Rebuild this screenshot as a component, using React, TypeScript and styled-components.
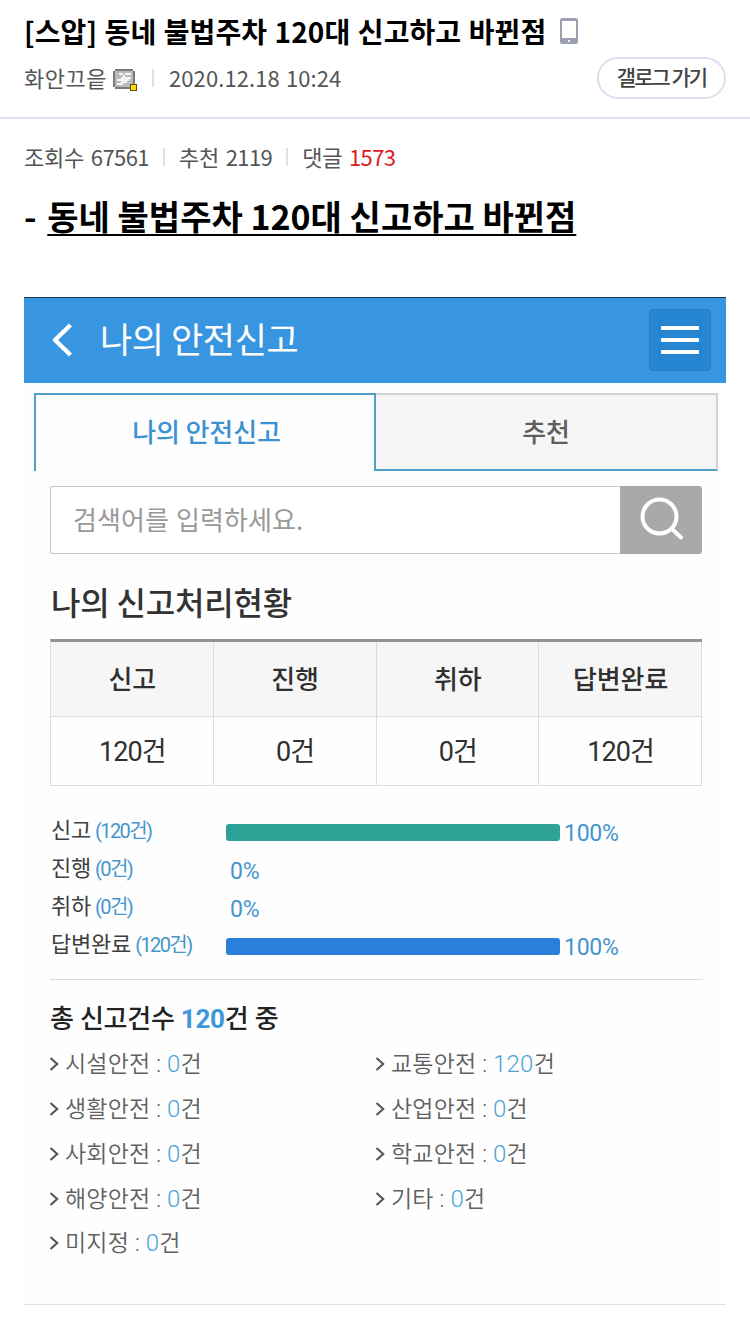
import React from "react";
import styled, { createGlobalStyle } from "styled-components";

const GlobalStyle = createGlobalStyle`
  * { box-sizing: border-box; }
  body {
    margin: 0;
    background: #fff;
    color: #000;
    font-family: "Noto Sans CJK KR", sans-serif;
  }
  h1, h2, h3, p, ul { margin: 0; padding: 0; font-weight: inherit; }
  button { font-family: inherit; padding: 0; cursor: pointer; }
`;

const Page = styled.main`
  width: 750px;
  height: 1320px;
  overflow: hidden;
  white-space: nowrap;
`;

const PostHeader = styled.header`
  height: 119px;
  padding: 11px 24px 0;
  border-bottom: 2px solid #e1e1f0;
`;

const PostTitle = styled.h1`
  display: flex;
  align-items: center;
  gap: 14px;
  height: 40px;
  font-size: 28px;
  font-weight: 700;
  letter-spacing: 0.1px;
  word-spacing: 1px;
  line-height: 40px;
`;

const MetaRow = styled.div`
  display: flex;
  align-items: center;
  height: 42px;
  margin-top: 6px;
  color: #555;
  font-size: 22px;
  line-height: 38px;
`;

const Author = styled.span`
  display: flex;
  align-items: center;
  gap: 6px;
  padding-bottom: 2px;
  letter-spacing: 0.5px;

  svg { margin-top: 6px; }
`;

const PostDate = styled.span`
  padding-bottom: 2px;
  letter-spacing: 0.1px;
  word-spacing: 1px;
`;

const Divider = styled.i<{ $gap: number }>`
  width: 2px;
  height: 18px;
  margin: 0 ${(p) => p.$gap}px;
  background: #dfdff0;
`;

const GallogButton = styled.button`
  width: 129px;
  height: 42px;
  margin-left: auto;
  border: 2px solid #dedef0;
  border-radius: 21px;
  padding-bottom: 4px;
  background: #fff;
  color: #444;
  font-size: 21px;
  font-weight: 500;
  letter-spacing: -2px;
  line-height: 34px;
`;

const Stats = styled.div`
  display: flex;
  align-items: center;
  height: 40px;
  margin: 18px 24px 0;
  color: #555;
  font-size: 22px;
  line-height: 36px;
`;

const Stat = styled.span`
  padding-bottom: 2px;
  letter-spacing: -0.2px;
  word-spacing: 2px;
`;

const Digits = styled.span`
  letter-spacing: -0.6px;
`;

const CommentCount = styled(Digits)`
  color: #dd1a21;
`;

const Headline = styled.h2`
  height: 120px;
  padding: 14px 24px 0;
  font-size: 34px;
  font-weight: 700;
  line-height: 50px;
`;

const Dash = styled.span`
  margin-right: 3px;
`;

const Underlined = styled.span`
  text-decoration: underline;
  text-decoration-thickness: 2px;
  text-underline-offset: 4px;
  text-decoration-skip-ink: none;
`;

const AppCard = styled.section`
  width: 702px;
  height: 1008px;
  margin: 0 24px;
  border-top: 1px solid #1f3550;
  border-bottom: 1px solid #e3e3e3;
  background: #fefefe;
`;

const AppBar = styled.header`
  display: flex;
  align-items: center;
  height: 85px;
  padding: 0 15px 1px 27px;
  background: #3896e1;
  color: #fff;
`;

const AppTitle = styled.h2`
  margin-left: 26px;
  padding-bottom: 6px;
  font-size: 35px;
  font-weight: 400;
  letter-spacing: -0.4px;
`;

const MenuButton = styled.button`
  display: flex;
  flex-direction: column;
  align-items: center;
  justify-content: center;
  gap: 8px;
  width: 62px;
  height: 62px;
  margin-left: auto;
  border: 1px solid #2280cb;
  border-radius: 4px;
  background: #2586d4;
`;

const MenuLine = styled.i`
  width: 38px;
  height: 4px;
  border-radius: 1px;
  background: #fff;
`;

const Tabs = styled.nav`
  display: flex;
  height: 78px;
  margin: 10px 8px 0 10px;
`;

const Tab = styled.button<{ $active?: boolean }>`
  width: 342px;
  padding: 0 0 ${(p) => (p.$active ? 6 : 4)}px ${(p) => (p.$active ? 3 : 0)}px;
  border: solid ${(p) => (p.$active ? "#4f9fc6" : "#d2d2d2")};
  border-width: ${(p) => (p.$active ? "2px 2px 0 2px" : "2px 2px 2px 0")};
  border-bottom-color: #4f9fc6;
  background: ${(p) => (p.$active ? "#fefefe" : "#f6f6f6")};
  color: ${(p) => (p.$active ? "#3a92d3" : "#5e5e5e")};
  font-size: 26px;
  font-weight: 500;
  letter-spacing: -0.1px;
`;

const SearchBar = styled.div`
  display: flex;
  width: 652px;
  height: 68px;
  margin: 15px 0 0 26px;
`;

const SearchField = styled.div`
  flex: 1;
  padding-left: 22px;
  border: 1px solid #c6c6c6;
  border-right: 0;
  border-radius: 3px 0 0 3px;
  background: #fff;
  color: #999;
  font-size: 26px;
  font-weight: 400;
  letter-spacing: 0.1px;
  word-spacing: 1px;
  line-height: 63px;
`;

const SearchButton = styled.button`
  width: 82px;
  border: 0;
  border-radius: 0 3px 3px 0;
  padding: 2px 0 0 2px;
  background: #a9a9a9;
`;

const SectionTitle = styled.h3`
  height: 85px;
  padding: 23px 0 0 27px;
  color: #333;
  font-size: 32px;
  font-weight: 500;
  letter-spacing: -0.2px;
  line-height: 48px;
`;

const StatusTable = styled.div`
  display: grid;
  grid-template-columns: repeat(4, 1fr);
  grid-template-rows: 75px 69px;
  width: 652px;
  margin-left: 26px;
  border-top: 3px solid #939393;
  border-left: 1px solid #dcdcdc;
`;

const Cell = styled.div<{ $head?: boolean }>`
  display: flex;
  align-items: center;
  justify-content: center;
  padding: 0 0 3px 1px;
  border-right: 1px solid #dcdcdc;
  border-bottom: 1px solid #dcdcdc;
  background: ${(p) => (p.$head ? "#f6f6f6" : "#fefefe")};
  color: #303030;
  font-family: Roboto, "Noto Sans CJK KR", sans-serif;
  font-size: ${(p) => (p.$head ? 26 : 27)}px;
  font-weight: ${(p) => (p.$head ? 500 : 400)};
  letter-spacing: ${(p) => (p.$head ? -0.1 : -0.9)}px;
`;

const Chart = styled.div`
  width: 653px;
  height: 194px;
  margin-left: 26px;
  padding-top: 27px;
  border-bottom: 1px solid #dadada;
`;

const ChartRow = styled.div`
  display: flex;
  align-items: center;
  height: 38px;
`;

const ChartLabel = styled.span`
  width: 176px;
  padding: 0 0 5px 1px;
  color: #404040;
  font-size: 22px;
  letter-spacing: -0.2px;
  line-height: 33px;
`;

const LabelCount = styled.span`
  margin-left: 4px;
  color: #4595ce;
  font-family: Roboto, "Noto Sans CJK KR", sans-serif;
  font-size: 20px;
  letter-spacing: -1.6px;
`;

const Bar = styled.i<{ $color: string }>`
  height: 17px;
  border-radius: 3px;
  background: ${(p) => p.$color};
`;

const Percent = styled.span`
  margin-left: 4px;
  padding-top: 3px;
  color: #4595ce;
  font-family: Roboto, sans-serif;
  font-size: 23px;
  letter-spacing: -0.3px;
  line-height: 35px;
`;

const Total = styled.h3`
  height: 60px;
  padding: 19px 0 0 26px;
  color: #222;
  font-family: Roboto, "Noto Sans CJK KR", sans-serif;
  font-size: 26px;
  font-weight: 500;
  letter-spacing: -0.25px;
  line-height: 40px;
`;

const TotalCount = styled.strong`
  color: #3f96da;
  font-weight: 700;
`;

const CategoryGrid = styled.ul`
  display: grid;
  grid-template-columns: 326px 326px;
  grid-auto-rows: 44.75px;
  margin-left: 25px;
  list-style: none;
`;

const Category = styled.li`
  display: flex;
  align-items: center;
  gap: 6px;
  color: #606060;
  font-family: Roboto, "Noto Sans CJK KR", sans-serif;
  font-size: 23px;
  font-weight: 350;

  svg { margin-top: 4px; }
`;

const CategoryText = styled.span`
  letter-spacing: 0.2px;
`;

const CategoryCount = styled.span`
  color: #4ba3d8;
  font-size: 24px;
`;

const PhoneIcon = () => (
  <svg width="18" height="26" viewBox="0 0 18 26">
    <rect width="18" height="26" rx="2.5" fill="#9c9eb2" />
    <rect x="2" y="3" width="14" height="17" fill="#fff" />
    <rect x="8" y="22" width="2" height="2" fill="#fff" />
  </svg>
);

const MemberIcon = () => (
  <svg width="24" height="23" viewBox="0 0 24 23" shapeRendering="crispEdges">
    <path d="M2 0H20V2H22V20H2V18H0V2H2Z" fill="#7b7b7b" />
    <rect x="2" y="2" width="18" height="16" fill="#bababa" />
    <path d="M6 4H10V6H6ZM12 4H18V6H12ZM4 8H10V6H12V8H18V10H16V12H14V14H10V16H4V14H8V12H4V10H8V8Z" fill="#f5f5f5" />
    <rect x="17" y="15" width="7" height="7" fill="#5b4d1c" />
    <rect x="18" y="16" width="5" height="5" fill="#ffda00" />
  </svg>
);

const BackIcon = () => (
  <svg width="23" height="34" viewBox="0 0 23 34" fill="none" stroke="#fff" strokeWidth="4.5">
    <path d="M19.500 2L4 17L19.500 32" strokeLinejoin="round" />
  </svg>
);

const SearchIcon = () => (
  <svg width="44" height="44" viewBox="0 0 44 44" fill="none" stroke="#fff" strokeLinecap="round">
    <circle cx="19.500" cy="19.500" r="17" strokeWidth="4" />
    <path d="M32 32L41 40.500" strokeWidth="4" />
  </svg>
);

const ChevronIcon = () => (
  <svg width="10" height="14" viewBox="0 0 10 14" fill="none" stroke="#555" strokeWidth="2.1">
    <path d="M1.500 1L8.200 7L1.500 13" />
  </svg>
);

const statuses = [
  { label: "신고", count: 120, percent: 100, color: "#2fa298" },
  { label: "진행", count: 0, percent: 0, color: "#2fa298" },
  { label: "취하", count: 0, percent: 0, color: "#2a7fda" },
  { label: "답변완료", count: 120, percent: 100, color: "#2a7fda" },
];

const categories: [string, number][] = [
  ["시설안전", 0],
  ["교통안전", 120],
  ["생활안전", 0],
  ["산업안전", 0],
  ["사회안전", 0],
  ["학교안전", 0],
  ["해양안전", 0],
  ["기타", 0],
  ["미지정", 0],
];

const BAR_WIDTH = 334;

export default function App() {
  return (
    <Page>
      <GlobalStyle />
      <PostHeader>
        <PostTitle>
          [스압] 동네 불법주차 120대 신고하고 바뀐점
          <PhoneIcon />
        </PostTitle>
        <MetaRow>
          <Author>
            화안끄읕
            <MemberIcon />
          </Author>
          <Divider $gap={15} />
          <PostDate>2020.12.18 10:24</PostDate>
          <GallogButton>갤로그 가기</GallogButton>
        </MetaRow>
      </PostHeader>
      <Stats>
        <Stat>
          조회수 <Digits>67561</Digits>
        </Stat>
        <Divider $gap={14} />
        <Stat>
          추천 <Digits>2119</Digits>
        </Stat>
        <Divider $gap={14} />
        <Stat>
          댓글 <CommentCount>1573</CommentCount>
        </Stat>
      </Stats>
      <Headline>
        <Dash>- </Dash>
        <Underlined>동네 불법주차 120대 신고하고 바뀐점</Underlined>
      </Headline>

      <AppCard>
        <AppBar>
          <BackIcon />
          <AppTitle>나의 안전신고</AppTitle>
          <MenuButton aria-label="메뉴">
            <MenuLine />
            <MenuLine />
            <MenuLine />
          </MenuButton>
        </AppBar>
        <Tabs>
          <Tab $active>나의 안전신고</Tab>
          <Tab>추천</Tab>
        </Tabs>
        <SearchBar>
          <SearchField>검색어를 입력하세요.</SearchField>
          <SearchButton aria-label="검색">
            <SearchIcon />
          </SearchButton>
        </SearchBar>

        <SectionTitle>나의 신고처리현황</SectionTitle>
        <StatusTable>
          {statuses.map((s) => (
            <Cell key={s.label} $head>
              {s.label}
            </Cell>
          ))}
          {statuses.map((s) => (
            <Cell key={s.label}>{s.count}건</Cell>
          ))}
        </StatusTable>

        <Chart>
          {statuses.map((s) => (
            <ChartRow key={s.label}>
              <ChartLabel>
                {s.label}
                <LabelCount>({s.count}건)</LabelCount>
              </ChartLabel>
              <Bar $color={s.color} style={{ width: (BAR_WIDTH * s.percent) / 100 }} />
              <Percent>{s.percent}%</Percent>
            </ChartRow>
          ))}
        </Chart>

        <Total>
          총 신고건수 <TotalCount>120</TotalCount>건 중
        </Total>
        <CategoryGrid>
          {categories.map(([name, count]) => (
            <Category key={name}>
              <ChevronIcon />
              <CategoryText>
                {name} : <CategoryCount>{count}</CategoryCount>건
              </CategoryText>
            </Category>
          ))}
        </CategoryGrid>
      </AppCard>
    </Page>
  );
}
